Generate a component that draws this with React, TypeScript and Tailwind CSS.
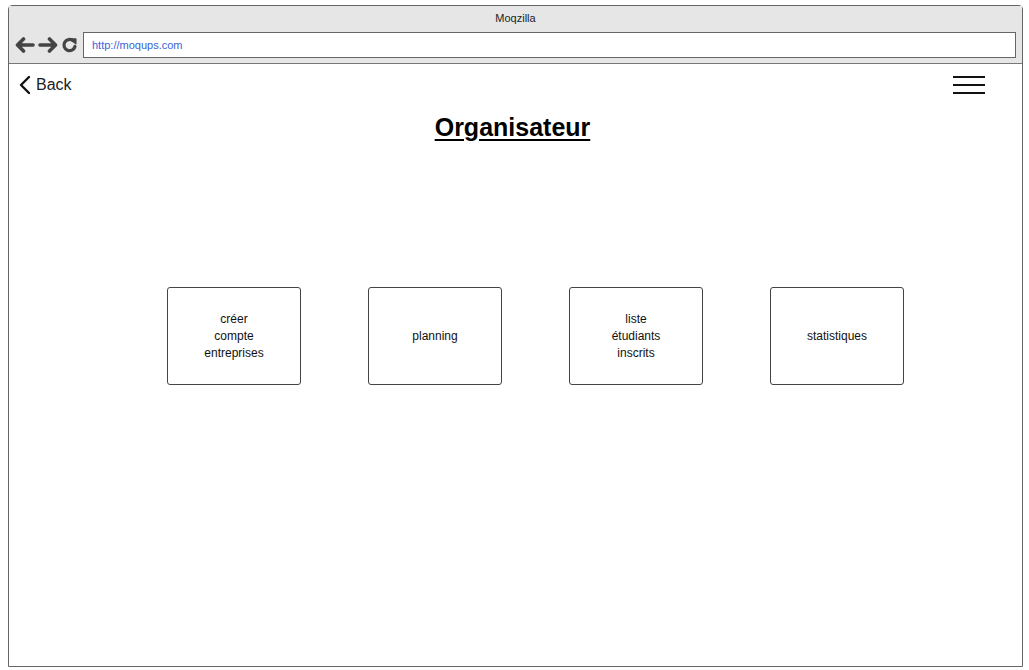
const tiles = [
  ['créer', 'compte', 'entreprises'],
  ['planning'],
  ['liste', 'étudiants', 'inscrits'],
  ['statistiques'],
]

function NavArrows() {
  return (
    <div className="flex items-center gap-[3px] pl-[6px] text-[#444]">
      <svg width="20" height="18" viewBox="0 0 20 18" fill="none" stroke="currentColor" strokeWidth="3.6" strokeLinecap="round" strokeLinejoin="round">
        <path d="M18 9H3M8.5 3 2.5 9 8.5 15" />
      </svg>
      <svg width="20" height="18" viewBox="0 0 20 18" fill="none" stroke="currentColor" strokeWidth="3.6" strokeLinecap="round" strokeLinejoin="round">
        <path d="M2 9h15M11.5 3 17.5 9 11.5 15" />
      </svg>
      <svg width="17" height="18" viewBox="0 0 17 18" fill="none" stroke="currentColor" strokeWidth="3.2" strokeLinecap="round">
        <path d="M14 10.5A5.6 5.6 0 1 1 12.2 4.8" />
        <path d="M10 3h4.8v4.8z" fill="currentColor" strokeWidth="1.5" strokeLinejoin="round" />
      </svg>
    </div>
  )
}

export default function App() {
  return (
    <div className="h-[670px] w-[1029px] bg-white pl-[8px] pt-[5px] font-['Liberation_Sans',Arial,sans-serif] text-black">
      <div className="flex h-[662px] w-[1015px] flex-col rounded-t-[4px] border border-[#666]">
        <header className="flex flex-col border-b border-[#777] bg-[#e6e6e6] pb-[5px]">
          <div className="h-[24px] text-center text-[11px] leading-[24px] text-[#222]">Moqzilla</div>
          <div className="mt-[2px] flex items-center">
            <NavArrows />
            <div className="ml-[5px] mr-[6px] flex h-[26px] flex-1 items-center border border-[#666] bg-white pl-[8px] text-[11px] text-[#3a63d8]">
              http://moqups.com
            </div>
          </div>
        </header>

        <div className="flex items-center justify-between pl-[9px] pr-[37px] pt-[11px]">
          <div className="flex items-center gap-[4px] text-[16px] leading-[20px] text-[#222]">
            <svg width="14" height="20" viewBox="0 0 14 20" fill="none" stroke="#111" strokeWidth="2.4" strokeLinecap="round" strokeLinejoin="round">
              <path d="M11 2 3 10l8 8" />
            </svg>
            Back
          </div>
          <div className="flex w-[32px] flex-col gap-[5.5px]">
            <span className="h-[2.5px] bg-[#111]" />
            <span className="h-[2.5px] bg-[#111]" />
            <span className="h-[2.5px] bg-[#111]" />
          </div>
        </div>

        <h1 className="mt-[18px] pr-[6px] text-center text-[25px] font-bold leading-[28px] underline underline-offset-[3px]">
          Organisateur
        </h1>

        <div className="mt-[146px] flex gap-[67px] pl-[158px]">
          {tiles.map((lines, i) => (
            <div
              key={i}
              className="flex h-[98px] w-[134px] flex-col items-center justify-center rounded-[3px] border border-[#444] text-center text-[12px] leading-[17px] text-[#111]"
            >
              {lines.map(l => (
                <span key={l}>{l}</span>
              ))}
            </div>
          ))}
        </div>
      </div>
    </div>
  )
}
